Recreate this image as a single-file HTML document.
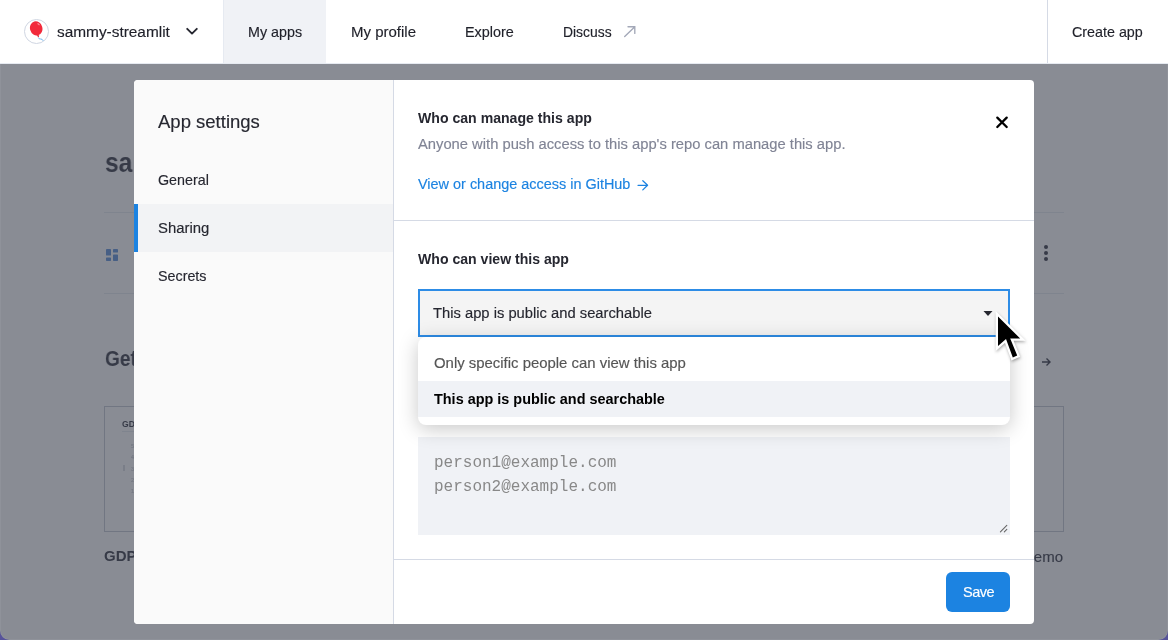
<!DOCTYPE html>
<html><head><meta charset="utf-8">
<style>
*{margin:0;padding:0;box-sizing:border-box}
html,body{width:1168px;height:640px;overflow:hidden;background:#fff;font-family:"Liberation Sans",sans-serif;color:#262730}
.a{position:absolute}
.t{position:absolute;white-space:pre;line-height:1;will-change:transform;-webkit-text-stroke:0.15px currentColor}
.b{font-weight:bold;-webkit-text-stroke:0}
#hdr{position:absolute;left:0;top:0;width:1168px;height:64px;background:#fff;border-bottom:1px solid #e6eaf1;z-index:3;color:#1f2029}
#page{position:absolute;left:0;top:0;width:1168px;height:640px;background:#fff;color:#31333f}
#ov{position:absolute;left:0;top:64px;width:1168px;height:576px;background:rgba(58,63,77,0.6);z-index:1}
#modal{position:absolute;left:134px;top:80px;width:900px;height:544px;background:#fff;border-radius:4px;overflow:hidden;z-index:2}
#side{position:absolute;left:0;top:0;width:260px;height:544px;background:#fafafa;border-right:1px solid #d5dae5}
.hl{position:absolute;background:#d5dae5;height:1px}
</style></head><body>

<div id="page">
  <div class="t b" style="left:105px;top:149.2px;font-size:28px;transform:scaleX(0.88);transform-origin:0 0">sa</div>
  <div class="a" style="left:104px;top:212px;width:960px;height:1px;background:#e6eaf1"></div>
  <svg class="a" style="left:106px;top:248.5px" width="12" height="12" viewBox="0 0 12 12"><g fill="#5b8fd9"><rect x="0" y="0" width="5" height="6.6" rx="0.7"/><rect x="7" y="0" width="5" height="3.6" rx="0.7"/><rect x="0" y="8.4" width="5" height="3.6" rx="0.7"/><rect x="7" y="5.4" width="5" height="6.6" rx="0.7"/></g></svg>
  <div class="a" style="left:104px;top:293px;width:960px;height:1px;background:#e6eaf1"></div>
  <svg class="a" style="left:1043px;top:244px" width="6" height="18" viewBox="0 0 6 18"><g fill="#31333f"><circle cx="3" cy="3" r="2"/><circle cx="3" cy="9" r="2"/><circle cx="3" cy="15" r="2"/></g></svg>
  <div class="t b" style="left:104.5px;top:347.7px;font-size:22.5px;transform:scaleX(0.85);transform-origin:0 0">Get inspired</div>
  <svg class="a" style="left:1041px;top:356px" width="10" height="12" viewBox="0 0 10 12"><path d="M1 6H9M5.5 2.5L9 6L5.5 9.5" stroke="#31333f" stroke-width="1.4" fill="none"/></svg>
  <div class="a" style="left:104px;top:406px;width:300px;height:126px;border:1px solid #c4c8d2"></div>
  <div class="a" style="left:763px;top:406px;width:301px;height:126px;border:1px solid #c4c8d2"></div>
  <div class="t b" style="left:122px;top:419.8px;font-size:8.6px">GDP dashboard</div>
  <div class="a" style="left:122px;top:431px;width:20px;height:1px;background:#e6eaf1"></div>
  <div class="t" style="left:130.5px;top:440.5px;font-size:5.5px;color:#c9ccd2;line-height:11.3px">5.0<br>4.0<br>3.0<br>2.0<br>1.0</div>
  <div class="a" style="left:123px;top:465px;width:2px;height:6px;background:#d9dbe0"></div>
  <div class="t b" style="left:104px;top:548px;font-size:15px">GDP dashboard</div>
  <div class="t" style="left:1023px;top:548.85px;font-size:15px;color:#31333f">Demo</div>
</div>
<div id="ov"></div>

<div id="hdr">
  <div class="a" style="left:24px;top:19px;width:25px;height:25px;border:1px solid #d0d6e2;border-radius:50%"></div>
  <svg class="a" style="left:28px;top:21px" width="18" height="21" viewBox="0 0 18 21"><ellipse cx="8.2" cy="7.4" rx="6.2" ry="7.2" transform="rotate(-16 8.2 7.4)" fill="#f22a3b"/><path d="M8.6 14.2L11.2 14.2L10.6 16.6Z" fill="#e21f30"/><path d="M10.4 16.6Q11 18.3 12.6 18T15.2 19.8" stroke="#5fb0ee" stroke-width="0.9" fill="none"/><ellipse cx="10.6" cy="3.2" rx="1.5" ry="0.7" fill="#f98a93" transform="rotate(40 10.6 3.2)"/></svg>
  <div class="t" style="left:57px;top:23.6px;font-size:15.4px">sammy-streamlit</div>
  <svg class="a" style="left:185px;top:26px" width="14" height="10" viewBox="0 0 14 10"><path d="M2.2 2.8L7 7.6L11.8 2.8" stroke="#262730" stroke-width="1.9" fill="none" stroke-linecap="round" stroke-linejoin="round"/></svg>
  <div class="a" style="left:223px;top:0;width:103px;height:63px;background:#f0f2f6;border-left:1px solid #e6eaf1"></div>
  <div class="t" style="left:248px;top:24.5px;font-size:14.3px">My apps</div>
  <div class="t" style="left:351px;top:24.1px;font-size:15px">My profile</div>
  <div class="t" style="left:465px;top:24.5px;font-size:14.4px">Explore</div>
  <div class="t" style="left:563px;top:25.9px;font-size:13.9px">Discuss</div>
  <svg class="a" style="left:622px;top:24px" width="16" height="16" viewBox="0 0 16 16"><path d="M2.7 12.6L12.6 2.9M6 2.7H12.8V9.4" stroke="#a3a8b8" stroke-width="1.35" fill="none" stroke-linecap="round"/></svg>
  <div class="a" style="left:1047px;top:0;width:1px;height:63px;background:#d5dae5"></div>
  <div class="t" style="left:1072px;top:24.5px;font-size:14.3px">Create app</div>
</div>

<div id="modal">
  <div id="side">
    <div class="t" style="left:24px;top:33.1px;font-size:18.5px">App settings</div>
    <div class="t" style="left:24px;top:93.35px;font-size:14.3px">General</div>
    <div class="a" style="left:0;top:124px;width:259px;height:48px;background:#f2f3f5"></div>
    <div class="a" style="left:0;top:124px;width:4px;height:48px;background:#1c83e1"></div>
    <div class="t" style="left:24px;top:141px;font-size:14.9px">Sharing</div>
    <div class="t" style="left:24px;top:189.35px;font-size:14.3px">Secrets</div>
  </div>
  <div class="t b" style="left:284.2px;top:31px;font-size:14.1px">Who can manage this app</div>
  <div class="t" style="left:284px;top:56.65px;font-size:14.76px;color:#808495">Anyone with push access to this app's repo can manage this app.</div>
  <div class="t" style="left:284px;top:96.7px;font-size:14.44px;color:#1c83e1">View or change access in GitHub</div>
  <svg class="a" style="left:503px;top:99px" width="12" height="12" viewBox="0 0 12 12"><path d="M1 6.3H10.6M5.8 1.7L10.6 6.3L5.8 10.9" stroke="#1c83e1" stroke-width="1.25" fill="none" stroke-linecap="round" stroke-linejoin="round"/></svg>
  <svg class="a" style="left:860px;top:34.4px" width="16" height="16" viewBox="0 0 16 16"><path d="M3.3 3.6L12.7 13M12.7 3.6L3.3 13" stroke="#000" stroke-width="2.3" stroke-linecap="round"/></svg>
  <div class="hl" style="left:260px;top:140px;width:640px"></div>
  <div class="t b" style="left:283.7px;top:172.3px;font-size:14.08px">Who can view this app</div>
  <div class="a" style="left:284px;top:209px;width:592px;height:48px;background:#f4f4f4;border:2px solid #2d8ce6"></div>
  <div class="t" style="left:299.1px;top:225.9px;font-size:14.75px">This app is public and searchable</div>
  <svg class="a" style="left:849px;top:230px" width="10" height="7" viewBox="0 0 10 7"><path d="M0.5 1H9.5L5 6Z" fill="#262730"/></svg>
  <div class="a" style="left:284px;top:357px;width:592px;height:98px;background:#f0f2f6"></div>
  <div class="t" style="left:300px;top:375.1px;font-size:16px;font-family:'Liberation Mono',monospace;color:#888;line-height:1;-webkit-text-stroke:0">person1@example.com</div>
  <div class="t" style="left:300px;top:398.8px;font-size:16px;font-family:'Liberation Mono',monospace;color:#888;line-height:1;-webkit-text-stroke:0">person2@example.com</div>
  <svg class="a" style="left:865px;top:444px" width="9" height="9" viewBox="0 0 9 9"><path d="M1.4 7.8L7.8 1.4M5.3 7.8L7.8 5.3" stroke="#666" stroke-width="1.1" stroke-linecap="round"/></svg>
  <div class="a" style="left:284px;top:257px;width:592px;height:88px;background:#fff;border-radius:8px;box-shadow:0 4px 20px rgba(0,0,0,0.22)"></div>
  <div class="t" style="left:300.4px;top:276px;font-size:14.91px;color:#555">Only specific people can view this app</div>
  <div class="a" style="left:284px;top:301px;width:592px;height:36px;background:#f0f2f6"></div>
  <div class="t b" style="left:300.4px;top:311.9px;font-size:14.43px;color:#000">This app is public and searchable</div>
  <div class="hl" style="left:260px;top:479px;width:640px"></div>
  <div class="a" style="left:812px;top:492px;width:64px;height:40px;background:#1c83e1;border-radius:6px"></div>
  <div class="t" style="left:828.8px;top:505.2px;font-size:14.5px;letter-spacing:-0.5px;color:#fff">Save</div>
</div>

<svg class="a" style="left:990px;top:306px;z-index:5" width="40" height="62" viewBox="0 0 40 62"><defs><filter id="sh" x="-50%" y="-50%" width="200%" height="200%"><feGaussianBlur stdDeviation="1.6"/></filter></defs>
<path d="M8 10.5V40L16 33L22.8 51.5L27.2 49.6L20.2 32.5H30.2Z" fill="rgba(0,0,0,0.3)" stroke="rgba(0,0,0,0.3)" stroke-width="4.6" filter="url(#sh)" transform="translate(0.5,1.5)"/>
<path d="M8 10.5V40L16 33L22.8 51.5L27.2 49.6L20.2 32.5H30.2Z" fill="#000" stroke="#fff" stroke-width="4.6" stroke-linejoin="miter" stroke-miterlimit="10" paint-order="stroke"/>
</svg>
<svg class="a" style="left:0;top:0;z-index:6;pointer-events:none" width="1168" height="640" viewBox="0 0 1168 640"><path d="M0 630.5A9.5 9.5 0 0 0 9.5 640H0Z" fill="#57539a"/><path d="M1168 630.5A9.5 9.5 0 0 1 1158.5 640H1168Z" fill="#57539a"/><path d="M0.5 64V630.5A9 9 0 0 0 9.5 639.5H1158.5A9 9 0 0 0 1167.5 630.5V64" fill="none" stroke="rgba(255,255,255,0.06)" stroke-width="1"/></svg>
</body></html>
